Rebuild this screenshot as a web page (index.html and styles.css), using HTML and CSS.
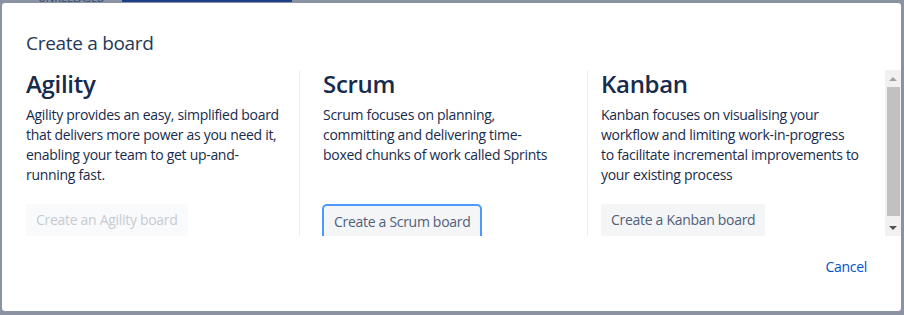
FILE: index.html
```html
<!DOCTYPE html>
<html lang="en">
<head>
  <meta charset="UTF-8">
  <title>Create a board</title>
  <link rel="stylesheet" href="styles.css">
</head>
<body>

  <div class="backdrop-strip">
    <span class="bg-label">UNRELEASED</span>
    <span class="bg-bar"></span>
  </div>

  <div class="modal">
    <header class="modal-header">
      <h1 class="modal-title">Create a board</h1>
    </header>

    <div class="modal-body">
      <div class="board-types">
        <section class="board-type agility">
          <div>
            <h2>Agility</h2>
            <p>Agility provides an easy, simplified board that delivers more power as you need it, enabling your team to get up-and-running fast.</p>
          </div>
          <button class="board-button" disabled>Create an Agility board</button>
        </section>

        <section class="board-type scrum">
          <div>
            <h2>Scrum</h2>
            <p>Scrum focuses on planning, committing and delivering time-boxed chunks of work called Sprints</p>
          </div>
          <button class="board-button focused">Create a Scrum board</button>
        </section>

        <section class="board-type kanban">
          <div>
            <h2>Kanban</h2>
            <p>Kanban focuses on visualising your workflow and limiting work-in-progress to facilitate incremental improvements to your existing process</p>
          </div>
          <button class="board-button">Create a Kanban board</button>
        </section>
      </div>

      <div class="scrollbar">
        <span class="scroll-arrow up"></span>
        <span class="scroll-thumb"></span>
        <span class="scroll-arrow down"></span>
      </div>
    </div>

    <footer class="modal-footer">
      <button class="link-button">Cancel</button>
    </footer>
  </div>

</body>
</html>
```

FILE: styles.css
```css
html {
  font-size: 14px;
}

body {
  margin: 0;
  background-color: #8b93a3;
  font-family: 'Open Sans', 'Noto Sans', Arial, sans-serif;
  color: #172b4d;
  letter-spacing: -0.3px;
  overflow: hidden;
}

/* page behind the blanket, only a sliver shows */
.backdrop-strip {
  height: 3px;
  overflow: hidden;
  display: flex;
  align-items: flex-start;
}

.bg-label {
  margin-left: 38px;
  margin-top: -8px;
  font-size: 11px;
  font-weight: 600;
  line-height: 11px;
  color: #45557a;
}

.bg-bar {
  margin-left: 17px;
  width: 170px;
  height: 2px;
  background-color: #1e3f88;
}

.modal {
  margin-left: 2px;
  width: 899px;
  height: 308px;
  background-color: #fff;
  border-radius: 3px;
  display: flex;
  flex-direction: column;
}

.modal-header {
  padding: 28px 24px 11px;
}

.modal-title {
  margin: 0;
  font-size: 19px;
  font-weight: 400;
  line-height: 24px;
  color: #253858;
}

.modal-body {
  height: 170px;
  display: flex;
  overflow: hidden;
}

.board-types {
  flex: 1;
  display: flex;
  padding: 4px 0 0 24px;
}

.board-type {
  display: flex;
  flex-direction: column;
  justify-content: space-between;
}

.board-type.agility {
  width: 260px;
  padding-right: 13px;
}

.board-type.scrum {
  width: 228px;
  padding: 0 36px 0 23px;
  border-left: 1px solid #ebecf0;
}

.board-type.kanban {
  width: 258px;
  padding-left: 13px;
  border-left: 1px solid #ebecf0;
}

.board-type h2 {
  margin: 0;
  font-size: 24px;
  font-weight: 600;
  line-height: 28px;
  color: #172b4d;
}

.board-type p {
  margin: 7px 0 0;
  font-size: 14px;
  line-height: 20px;
  color: #172b4d;
}

.board-button {
  align-self: flex-start;
  height: 32px;
  padding: 0 10px;
  border: none;
  border-radius: 3px;
  background-color: #f4f5f7;
  color: #505f79;
  font-family: inherit;
  font-size: 14px;
  letter-spacing: inherit;
  line-height: 32px;
}

.board-button:disabled {
  background-color: #f9fafb;
  color: #c6cbd4;
}

.board-button.focused {
  margin-left: 1px;
  margin-bottom: -2px;
  box-shadow: 0 0 0 2px #4c9aff;
}

/* drawn scrollbar of the body */
.scrollbar {
  margin: 4px 0 0 auto;
  width: 16px;
  display: flex;
  flex-direction: column;
  background-color: #f1f1f1;
}

.scroll-arrow {
  height: 17px;
  display: flex;
  align-items: center;
  justify-content: center;
}

.scroll-arrow::before {
  content: "";
  border-left: 4px solid transparent;
  border-right: 4px solid transparent;
}

.scroll-arrow.up::before {
  border-bottom: 4px solid #a3a3a3;
}

.scroll-arrow.down::before {
  border-top: 4px solid #505050;
}

.scroll-thumb {
  flex: 1;
  margin: 0 1px 3px 2px;
  background-color: #c1c1c1;
}

.modal-footer {
  display: flex;
  justify-content: flex-end;
  padding: 15px 24px 28px;
}

.link-button {
  height: 32px;
  padding: 0 10px;
  border: none;
  background: none;
  color: #0052cc;
  font-family: inherit;
  font-size: 14px;
  letter-spacing: inherit;
  line-height: 32px;
}
```
